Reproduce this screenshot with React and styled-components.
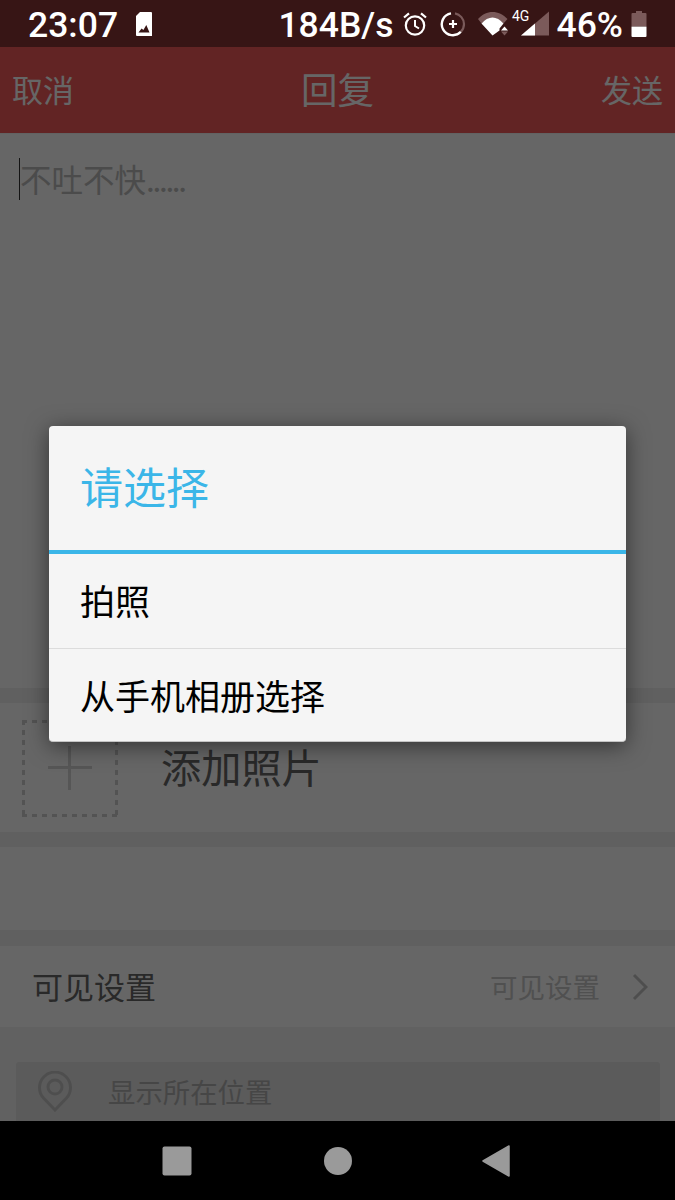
import React from "react";
import styled, { createGlobalStyle } from "styled-components";

const CJK = `"Noto Sans CJK SC", "Noto Sans", sans-serif`;

const Global = createGlobalStyle`
  html, body { margin: 0; padding: 0; background: #000; }
  * { box-sizing: border-box; }
`;

const Phone = styled.div`
  width: 675px; height: 1200px; display: flex; flex-direction: column;
  overflow: hidden; font-family: ${CJK};
`;

const StatusBar = styled.div`
  height: 47px; flex: none; background: #371515; color: #fff;
  display: flex; align-items: center; justify-content: space-between;
  padding: 0 28px; font-family: Roboto, sans-serif; font-weight: 500;
`;
const StatusGroup = styled.div`
  display: flex; align-items: center; height: 100%;
`;
const StatusText = styled.span`
  font-size: 35.5px; line-height: 50px; margin: 2px 0 0 ${p => p.$ml || 0}px;
  white-space: nowrap;
`;
const StatusIcon = styled.svg`
  flex: none; display: block; margin-left: ${p => p.$ml || 0}px;
`;

const Screen = styled.div`
  position: relative; flex: 1; min-height: 0; overflow: hidden;
  display: flex; flex-direction: column; background: #fff;
`;
const Header = styled.header`
  height: 86px; flex: none; background: #f55a5a; color: #fff;
  display: flex; align-items: flex-start; justify-content: space-between; padding: 0 12px;
`;
const HeaderAction = styled.span`
  font-size: 31px; line-height: 83px; width: 80px; text-align: ${p => p.$end ? "right" : "left"};
`;
const HeaderTitle = styled.h1`
  margin: 0; font-size: 36.5px; font-weight: 400; line-height: 83px;
`;
const Editor = styled.div`
  height: 555px; flex: none; padding: 24px 0 0 19px; border-top: 1px solid #f4f4f4;
`;
const Placeholder = styled.div`
  border-left: 1px solid #333; height: 42px;
  font-size: 31.5px; line-height: 40px; color: #bbb; white-space: nowrap;
`;
const PlaceholderDots = styled.span`
  letter-spacing: -2.3px;
`;
const Band = styled.div`
  height: ${p => p.$h || 15}px; flex: none; background: #f1f1f1;
`;
const PhotoRow = styled.div`
  height: 129px; flex: none; display: flex; align-items: center; padding: 0 0 0 22px; gap: 43px;
`;
const AddBox = styled.div`
  width: 96px; height: 97px; position: relative; margin-top: 1px; flex: none;
  background-image:
    linear-gradient(to right, #d0d0d0 50%, transparent 50%),
    linear-gradient(to right, #d0d0d0 50%, transparent 50%),
    linear-gradient(to bottom, #d0d0d0 50%, transparent 50%),
    linear-gradient(to bottom, #d0d0d0 50%, transparent 50%);
  background-size: 10px 3px, 10px 3px, 3px 10px, 3px 10px;
  background-position: 0 0, 0 100%, 0 0, 100% 0;
  background-repeat: repeat-x, repeat-x, repeat-y, repeat-y;
  &::before { content: ""; position: absolute; left: 26px; top: 46px; width: 44px; height: 3px; background: #d8d8d8; }
  &::after { content: ""; position: absolute; left: 46px; top: 26px; width: 3px; height: 44px; background: #d8d8d8; }
`;
const AddLabel = styled.span`
  font-size: 40.2px; line-height: 50px; color: #666; margin-top: -4px;
`;
const Spacer = styled.div`
  height: ${p => p.$h}px; flex: none;
`;
const SettingRow = styled.div`
  height: 81px; flex: none; display: flex; align-items: center; padding: 0 27px 0 32px;
`;
const SettingLabel = styled.span`
  font-size: 31px; color: #666; flex: 1; line-height: 44px; margin-top: -2px;
`;
const SettingValue = styled.span`
  font-size: 27.5px; color: #c8c8c8; line-height: 40px; margin-right: 32px; margin-top: -2px;
`;
const Lower = styled.div`
  flex: 1; background: #f3f3f3; padding: 35px 15px 0 16px;
`;
const LocationBox = styled.div`
  height: 120px; background: #e3e3e3; border-radius: 3px;
  display: flex; align-items: flex-start; padding: 9px 0 0 22px;
`;
const LocationText = styled.span`
  font-size: 27.4px; line-height: 40px; color: #b0b0b0; margin-left: 36px;
`;
const Scrim = styled.div`
  position: absolute; inset: 0; background: rgba(0, 0, 0, 0.6);
`;
const Dialog = styled.div`
  position: absolute; left: 49px; top: 379px; width: 577px; height: 316px;
  background: #f5f5f5; border-radius: 4px; border-bottom: 1px solid #c4c4c4;
  box-shadow: 0 4px 22px rgba(0, 0, 0, 0.5);
  display: flex; flex-direction: column;
`;
const DialogTitle = styled.div`
  height: 124px; flex: none; padding-left: 31px; font-size: 43px; line-height: 119px; color: #3bb6e8;
`;
const DialogRule = styled.div`
  height: 4px; flex: none; background: #3bb6e8;
`;
const DialogItem = styled.div`
  height: ${p => p.$h}px; flex: none; padding-left: 31px; font-size: 35px; color: #000;
  line-height: 92px; white-space: nowrap;
  border-top: ${p => p.$line ? "1px solid #dcdcdc" : "0"};
`;
const NavBar = styled.nav`
  height: 79px; flex: none; background: #000; display: flex; align-items: center;
  justify-content: flex-start; padding-left: 162px;
`;
const NavIcon = styled.svg`
  display: block; flex: none; margin-right: ${p => p.$mr || 0}px;
`;

function AlarmIcon() {
  return (
    <StatusIcon $ml={8} width="26" height="26" viewBox="0 0 26 26" fill="none" stroke="#fff">
      <circle cx="13" cy="14.5" r="9.2" strokeWidth="2.2" />
      <path d="M13 9v6l4 2.5" strokeWidth="2" />
      <path d="M2 6.5 7 2.3M24 6.5 19 2.3" strokeWidth="2.2" />
    </StatusIcon>
  );
}
function SaverIcon() {
  return (
    <StatusIcon $ml={12} width="26" height="26" viewBox="0 0 26 26" fill="none" stroke="#fff">
      <path d="M15 2.400A11 11 0 0 1 24 13a11 11 0 0 1-3.200 7.800" strokeWidth="2.200" stroke="#7a5a5a" />
      <path d="M20.800 20.800A11 11 0 1 1 11 2.400" strokeWidth="2.400" />
      <path d="M13 9v8M9 13h8" strokeWidth="2.200" />
    </StatusIcon>
  );
}
function WifiSignal() {
  return (
    <StatusIcon $ml={12} width="72" height="30" viewBox="0 0 72 30" fill="none">
      <path d="M0 10C8 .5 21 .5 29.500 10L25.500 14.500C19 7 10 7 3.500 14.500Z" fill="#7b5a5a" />
      <path d="M3.500 14.500C10 6.500 19 6.500 25.500 14.500L21.500 19.500 21.500 21.500 14.500 26.500Z" fill="#fff" />
      <path d="M23 21.500 26.500 17.500 30 21.500Z" fill="#fff" />
      <path d="M23 22.500H30L26.500 26.500Z" fill="#7b5a5a" />
      <path d="M43 26.500 71 2.500V26.500Z" fill="#7b5a5a" />
      <path d="M43 26.500 57 14.500V26.500Z" fill="#fff" />
      <text x="34" y="11.500" fontFamily="Roboto, sans-serif" fontSize="14" fill="#fff" fontWeight="400">4G</text>
    </StatusIcon>
  );
}
function BatteryIcon() {
  return (
    <StatusIcon $ml={8} width="16" height="26" viewBox="0 0 16 26">
      <path d="M5 0h6v2h3.500a1 1 0 0 1 1 1v12H.5V3a1 1 0 0 1 1-1H5Z" fill="#7b5a5a" />
      <path d="M.5 15.500h15v9.500a1 1 0 0 1-1 1h-13a1 1 0 0 1-1-1Z" fill="#fff" />
    </StatusIcon>
  );
}
function ImageNoteIcon() {
  return (
    <StatusIcon $ml={18} width="16" height="24" viewBox="0 0 16 24">
      <path fillRule="evenodd" d="M4 0h11a1 1 0 0 1 1 1v23H1a1 1 0 0 1-1-1V4Zm-1.500 20.500h11L10.300 13 7.400 18 5.600 16.500Z" fill="#fff" />
    </StatusIcon>
  );
}

export default function App() {
  return (
    <Phone>
      <Global />
      <StatusBar>
        <StatusGroup>
          <StatusText>23:07</StatusText>
          <ImageNoteIcon />
        </StatusGroup>
        <StatusGroup>
          <StatusText>184B/s</StatusText>
          <AlarmIcon />
          <SaverIcon />
          <WifiSignal />
          <StatusText $ml={7}>46%</StatusText>
          <BatteryIcon />
        </StatusGroup>
      </StatusBar>
      <Screen>
        <Header>
          <HeaderAction>取消</HeaderAction>
          <HeaderTitle>回复</HeaderTitle>
          <HeaderAction $end>发送</HeaderAction>
        </Header>
        <Editor>
          <Placeholder>不吐不快<PlaceholderDots>......</PlaceholderDots></Placeholder>
        </Editor>
        <Band />
        <PhotoRow>
          <AddBox />
          <AddLabel>添加照片</AddLabel>
        </PhotoRow>
        <Band />
        <Spacer $h={83} />
        <Band $h={16} />
        <SettingRow>
          <SettingLabel>可见设置</SettingLabel>
          <SettingValue>可见设置</SettingValue>
          <svg width="16" height="28" viewBox="0 0 16 28" fill="none" stroke="#c4c4c4" strokeWidth="3">
            <path d="M2 2l12 12L2 26" />
          </svg>
        </SettingRow>
        <Lower>
          <LocationBox>
            <svg width="34" height="41" viewBox="0 0 34 41" fill="none" stroke="#c4c4c4" strokeWidth="3">
              <path d="M17 39 5.500 27A15.500 15.500 0 1 1 28.500 27Z" />
              <circle cx="17" cy="16" r="7" />
            </svg>
            <LocationText>显示所在位置</LocationText>
          </LocationBox>
        </Lower>
        <Scrim />
        <Dialog>
          <DialogTitle>请选择</DialogTitle>
          <DialogRule />
          <DialogItem $h={94}>拍照</DialogItem>
          <DialogItem $h={93} $line>从手机相册选择</DialogItem>
        </Dialog>
      </Screen>
      <NavBar>
        <NavIcon $mr={132} width="30" height="30" viewBox="0 0 30 30">
          <rect x="0.500" y="0.500" width="29" height="29" rx="2" fill="#9a9a9a" />
        </NavIcon>
        <NavIcon $mr={130} width="28" height="28" viewBox="0 0 28 28">
          <circle cx="14" cy="14" r="14" fill="#9a9a9a" />
        </NavIcon>
        <NavIcon width="28" height="32" viewBox="0 0 28 32">
          <path d="M27 1 1 16 27 31Z" fill="#9a9a9a" stroke="#9a9a9a" strokeWidth="1.500" strokeLinejoin="round" />
        </NavIcon>
      </NavBar>
    </Phone>
  );
}
